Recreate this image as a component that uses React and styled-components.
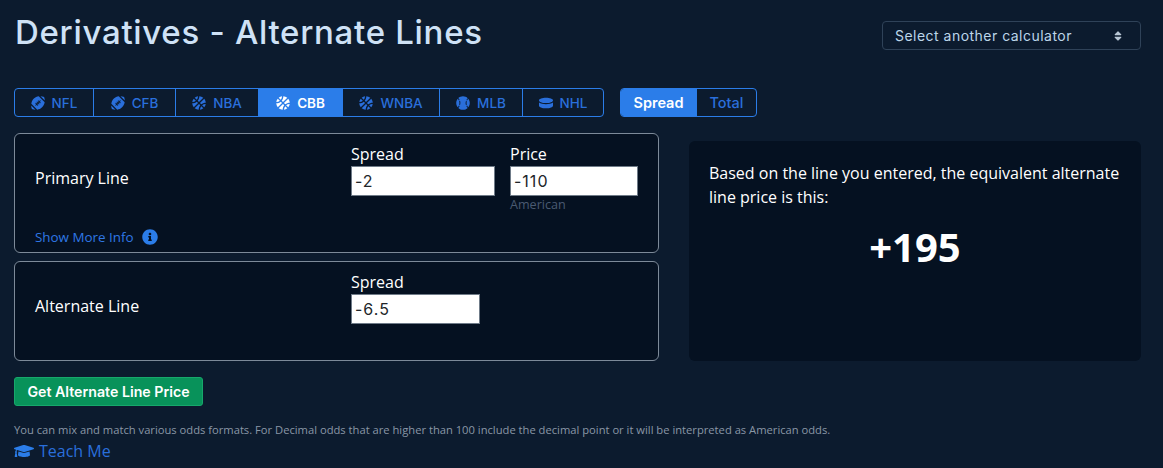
import styled, { createGlobalStyle } from 'styled-components';
import {
  FaFootballBall,
  FaBasketballBall,
  FaBaseballBall,
  FaHockeyPuck,
  FaGraduationCap,
  FaInfoCircle,
  FaSort,
} from 'react-icons/fa';

const BLUE = '#2b7de9';
const LINK = '#2a6fdb';

const GlobalStyle = createGlobalStyle`
  html, body {
    margin: 0;
    padding: 0;
    background: #0c1b2e;
  }
  body {
    font-family: "Open Sans", "Noto Sans", sans-serif;
    color: #fff;
  }
  * {
    box-sizing: border-box;
  }
`;

const Page = styled.div`
  width: 1163px;
  height: 468px;
  padding: 0 22px 0 14px;
  overflow: hidden;
`;

const Header = styled.div`
  display: flex;
  justify-content: space-between;
  height: 88px;
`;

const Title = styled.h1`
  margin: 11px 0 0 1px;
  font-family: Inter, sans-serif;
  font-size: 33px;
  line-height: 42px;
  font-weight: 500;
  letter-spacing: 0.7px;
  color: #cfe2f6;
`;

const SelectBox = styled.div`
  display: flex;
  align-items: center;
  justify-content: space-between;
  margin-top: 21px;
  width: 259px;
  height: 29px;
  padding: 0 16px 0 12px;
  border: 1px solid #2f4258;
  border-radius: 4px;
  font-family: Inter, sans-serif;
  font-size: 14px;
  font-weight: 400;
  letter-spacing: 0.48px;
  color: #bcd6ea;

  svg {
    width: 12px;
    height: 12px;
    color: #b8c6d4;
  }
`;

const Toolbar = styled.div`
  display: flex;
  gap: 16px;
  height: 29px;
`;

const TabGroup = styled.div`
  display: flex;
  height: 29px;
  border: 1px solid ${BLUE};
  border-radius: 4px;
  overflow: hidden;
`;

const Tab = styled.div`
  display: flex;
  align-items: center;
  justify-content: center;
  gap: 7px;
  width: ${(p) => p.$width}px;
  height: 100%;
  font-family: Inter, sans-serif;
  font-size: 13.5px;
  font-weight: ${(p) => (p.$active ? 600 : 500)};
  color: ${(p) => (p.$active ? '#fff' : LINK)};
  background: ${(p) => (p.$active ? BLUE : 'transparent')};
  border-right: 1px solid ${BLUE};

  &:last-child {
    border-right: 0;
  }

  svg {
    width: 14px;
    height: 14px;
  }
`;

const ToggleTab = styled(Tab)`
  font-size: 14.5px;
`;

const Main = styled.div`
  display: flex;
  gap: 30px;
  margin-top: 16px;
`;

const LeftColumn = styled.div`
  display: flex;
  flex-direction: column;
  gap: 8px;
  width: 645px;
`;

const Card = styled.div`
  position: relative;
  display: flex;
  height: ${(p) => p.$height}px;
  padding: 0 0 0 20px;
  background: #051121;
  border: 1px solid #7d8a99;
  border-radius: 6px;
`;

const LineLabel = styled.div`
  width: 316px;
  margin-top: ${(p) => p.$top}px;
  font-size: 16px;
  line-height: 22px;
  color: #fff;
`;

const Field = styled.div`
  display: flex;
  flex-direction: column;
  width: ${(p) => p.$width}px;
  margin-right: 15px;
`;

const FieldLabel = styled.div`
  margin-top: 9px;
  margin-bottom: 1px;
  font-size: 16px;
  line-height: 22px;
  color: #fff;
`;

const ValueInput = styled.input`
  width: 100%;
  height: 30px;
  padding: 0 0 0 3px;
  border: 1px solid #6f7b88;
  border-radius: 0;
  background: #fff;
  font-family: Inter, sans-serif;
  font-size: 16px;
  letter-spacing: 1px;
  color: #212529;
  outline: none;
`;

const Hint = styled.div`
  font-size: 12.6px;
  line-height: 17px;
  color: #4a5a71;
`;

const MoreInfo = styled.div`
  position: absolute;
  left: 20px;
  bottom: 6px;
  display: flex;
  align-items: center;
  gap: 8px;
  font-size: 13.4px;
  line-height: 18px;
  color: #2f78e6;

  svg {
    width: 16px;
    height: 16px;
    color: ${BLUE};
  }
`;

const ResultPanel = styled.div`
  width: 452px;
  height: 220px;
  margin-top: 8px;
  padding: 20px;
  background: #051121;
  border-radius: 6px;
`;

const ResultText = styled.div`
  font-size: 16px;
  line-height: 24px;
  color: #fff;
`;

const ResultValue = styled.div`
  margin-top: 11px;
  text-align: center;
  font-size: 40px;
  line-height: 54px;
  font-weight: 700;
  color: #fff;
`;

const SubmitButton = styled.button`
  display: block;
  width: 189px;
  height: 29px;
  margin-top: 16px;
  padding: 0;
  border: 1px solid #17a86b;
  border-radius: 3px;
  background: #08925a;
  font-family: Inter, sans-serif;
  font-size: 14.2px;
  font-weight: 600;
  color: #fff;
`;

const Note = styled.div`
  margin-top: 16px;
  font-size: 11.2px;
  line-height: 15px;
  color: #8a97a6;
`;

const TeachLink = styled.div`
  display: flex;
  align-items: center;
  gap: 5px;
  margin-top: 3px;
  font-size: 16px;
  line-height: 22px;
  color: ${LINK};

  svg {
    width: 20px;
    height: 16px;
    color: ${BLUE};
  }
`;

const leagues = [
  { name: 'NFL', width: 79, icon: FaFootballBall },
  { name: 'CFB', width: 82, icon: FaFootballBall },
  { name: 'NBA', width: 83, icon: FaBasketballBall },
  { name: 'CBB', width: 84, icon: FaBasketballBall, active: true },
  { name: 'WNBA', width: 97, icon: FaBasketballBall },
  { name: 'MLB', width: 83, icon: FaBaseballBall },
  { name: 'NHL', width: 80, icon: FaHockeyPuck },
];

const App = () => {
  return (
    <Page>
      <GlobalStyle />
      <Header>
        <Title>Derivatives - Alternate Lines</Title>
        <SelectBox>
          Select another calculator
          <FaSort />
        </SelectBox>
      </Header>
      <Toolbar>
        <TabGroup>
          {leagues.map(({ name, width, icon: Icon, active }) => (
            <Tab key={name} $width={width} $active={active}>
              <Icon />
              {name}
            </Tab>
          ))}
        </TabGroup>
        <TabGroup>
          <ToggleTab $width={76} $active>
            Spread
          </ToggleTab>
          <ToggleTab $width={59}>Total</ToggleTab>
        </TabGroup>
      </Toolbar>
      <Main>
        <LeftColumn>
          <Card $height={120}>
            <LineLabel $top={33}>Primary Line</LineLabel>
            <Field $width={144}>
              <FieldLabel>Spread</FieldLabel>
              <ValueInput defaultValue="-2" />
            </Field>
            <Field $width={128}>
              <FieldLabel>Price</FieldLabel>
              <ValueInput defaultValue="-110" />
              <Hint>American</Hint>
            </Field>
            <MoreInfo>
              Show More Info
              <FaInfoCircle />
            </MoreInfo>
          </Card>
          <Card $height={100}>
            <LineLabel $top={33}>Alternate Line</LineLabel>
            <Field $width={129}>
              <FieldLabel>Spread</FieldLabel>
              <ValueInput defaultValue="-6.5" />
            </Field>
          </Card>
        </LeftColumn>
        <ResultPanel>
          <ResultText>
            Based on the line you entered, the equivalent alternate line price is this:
          </ResultText>
          <ResultValue>+195</ResultValue>
        </ResultPanel>
      </Main>
      <SubmitButton>Get Alternate Line Price</SubmitButton>
      <Note>
        You can mix and match various odds formats. For Decimal odds that are higher than 100
        include the decimal point or it will be interpreted as American odds.
      </Note>
      <TeachLink>
        <FaGraduationCap />
        Teach Me
      </TeachLink>
    </Page>
  );
};

export default App;
